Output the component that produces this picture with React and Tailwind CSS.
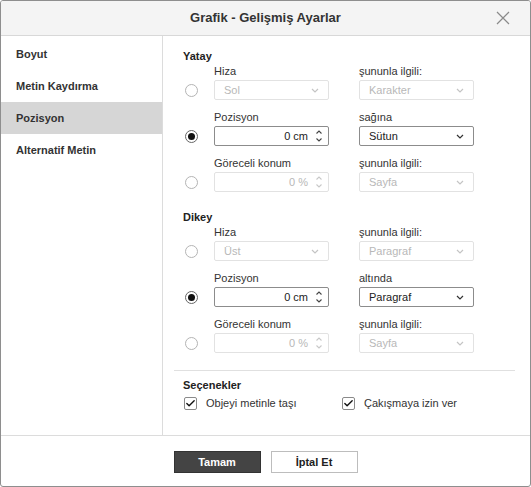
import { Check } from "lucide-react";

const font = { fontFamily: '"Liberation Sans", Arial, sans-serif' };

function Chevron({ disabled }) {
  return (
    <svg width="8" height="5" viewBox="0 0 8 5" className="shrink-0">
      <path d="M1 1l3 3 3-3" fill="none" stroke={disabled ? "#c4c4c4" : "#333"} strokeWidth="1.2" />
    </svg>
  );
}

function Spinner({ disabled }) {
  const c = disabled ? "#c8c8c8" : "#444";
  return (
    <svg width="8" height="14" viewBox="0 0 8 14" className="shrink-0">
      <path d="M1.5 4.5l2.5-2.5 2.5 2.5" fill="none" stroke={c} strokeWidth="1.1" />
      <path d="M1.5 9.5l2.5 2.5 2.5-2.5" fill="none" stroke={c} strokeWidth="1.1" />
    </svg>
  );
}

function Select({ value, disabled }) {
  return (
    <div className={`h-[20px] w-[115px] flex items-center justify-between pl-[9px] pr-[9px] border rounded-[2px] bg-white text-[11px] ${disabled ? "border-[#e2e2e2] text-[#b8b8b8]" : "border-[#8c8c8c] text-[#222]"}`}>
      <span>{value}</span>
      <Chevron disabled={disabled} />
    </div>
  );
}

function Number({ value, disabled }) {
  return (
    <div className={`h-[20px] w-[115px] flex items-center justify-end gap-[7px] pr-[5px] border rounded-[2px] bg-white text-[11px] ${disabled ? "border-[#e2e2e2] text-[#b8b8b8]" : "border-[#8c8c8c] text-[#222]"}`}>
      <span>{value}</span>
      <Spinner disabled={disabled} />
    </div>
  );
}

function Radio({ on }) {
  return (
    <div className={`ml-[2px] w-[13px] h-[13px] rounded-full border flex items-center justify-center ${on ? "border-[#666]" : "border-[#b4b4b4]"}`}>
      {on && <div className="w-[7px] h-[7px] rounded-full bg-[#111]" />}
    </div>
  );
}

function Row({ label, right, on, control, rightControl }) {
  return (
    <div className="grid grid-cols-[31px_115px_30px_115px] mb-[9px]">
      <div />
      <div className="h-[16px] leading-[16px] text-[11px] text-[#333]">{label}</div>
      <div />
      <div className="h-[16px] leading-[16px] text-[11px] text-[#333]">{right}</div>
      <div className="flex items-center mt-[1px]"><Radio on={on} /></div>
      <div className="mt-[1px]">{control}</div>
      <div />
      <div className="mt-[1px]">{rightControl}</div>
    </div>
  );
}

function Box({ label }) {
  return (
    <div className="flex items-center gap-[9px]">
      <div className="w-[13px] h-[13px] border border-[#8a8a8a] rounded-[2px] bg-white flex items-center justify-center">
        <Check className="w-[11px] h-[11px] text-[#111]" strokeWidth={3} />
      </div>
      <span className="text-[11px] text-[#333]">{label}</span>
    </div>
  );
}

export default function App() {
  const nav = ["Boyut", "Metin Kaydırma", "Pozisyon", "Alternatif Metin"];
  return (
    <div style={font} className="w-[531px] h-[487px] bg-white">
      <div className="w-full h-full flex flex-col border border-[#8e8e8e] rounded-[3px] overflow-hidden">
        <div className="h-[35px] shrink-0 relative flex items-center justify-center bg-[#f4f4f4] border-b border-[#d8d8d8]">
          <span className="text-[13px] font-bold text-[#333]">Grafik - Gelişmiş Ayarlar</span>
          <svg className="absolute right-[20px] top-[10px]" width="14" height="14" viewBox="0 0 14 14">
            <path d="M1 1l12 12M13 1L1 13" stroke="#8a8a8a" strokeWidth="1.2" />
          </svg>
        </div>

        <div className="flex-1 flex min-h-0">
          <div className="w-[162px] shrink-0 border-r border-[#dcdcdc] pt-[2px]">
            {nav.map((n) => (
              <div key={n} className={`h-[32px] flex items-center pl-[15px] text-[11px] font-bold text-[#333] ${n === "Pozisyon" ? "bg-[#d6d6d6]" : ""}`}>
                {n}
              </div>
            ))}
          </div>

          <div className="flex-1 pt-[13px]">
            <div className="pl-[20px]">
              <div className="h-[14px] leading-[14px] text-[11px] font-bold text-[#222]">Yatay</div>
              <Row label="Hiza" right="şununla ilgili:" control={<Select value="Sol" disabled />} rightControl={<Select value="Karakter" disabled />} />
              <Row label="Pozisyon" right="sağına" on control={<Number value="0 cm" />} rightControl={<Select value="Sütun" />} />
              <Row label="Göreceli konum" right="şununla ilgili:" control={<Number value="0 %" disabled />} rightControl={<Select value="Sayfa" disabled />} />

              <div className="h-[14px] leading-[14px] text-[11px] font-bold text-[#222] mt-[18px]">Dikey</div>
              <Row label="Hiza" right="şununla ilgili:" control={<Select value="Üst" disabled />} rightControl={<Select value="Paragraf" disabled />} />
              <Row label="Pozisyon" right="altında" on control={<Number value="0 cm" />} rightControl={<Select value="Paragraf" />} />
              <Row label="Göreceli konum" right="şununla ilgili:" control={<Number value="0 %" disabled />} rightControl={<Select value="Sayfa" disabled />} />
            </div>

            <div className="ml-[11px] mr-[15px] mt-[17px] border-t border-[#e0e0e0]" />

            <div className="pl-[20px] pt-[7px]">
              <div className="h-[14px] leading-[14px] text-[11px] font-bold text-[#222]">Seçenekler</div>
              <div className="flex mt-[3px] ml-[1px]">
                <div className="w-[158px]"><Box label="Objeyi metinle taşı" /></div>
                <Box label="Çakışmaya izin ver" />
              </div>
            </div>
          </div>
        </div>

        <div className="h-[51px] shrink-0 border-t border-[#dcdcdc] flex justify-center gap-[10px] pt-[15px]">
          <button className="w-[87px] h-[22px] bg-[#444] border border-[#333] text-white text-[11px] font-bold">Tamam</button>
          <button className="w-[87px] h-[22px] bg-white border border-[#bdbdbd] text-[#222] text-[11px] font-bold">İptal Et</button>
        </div>
      </div>
    </div>
  );
}
